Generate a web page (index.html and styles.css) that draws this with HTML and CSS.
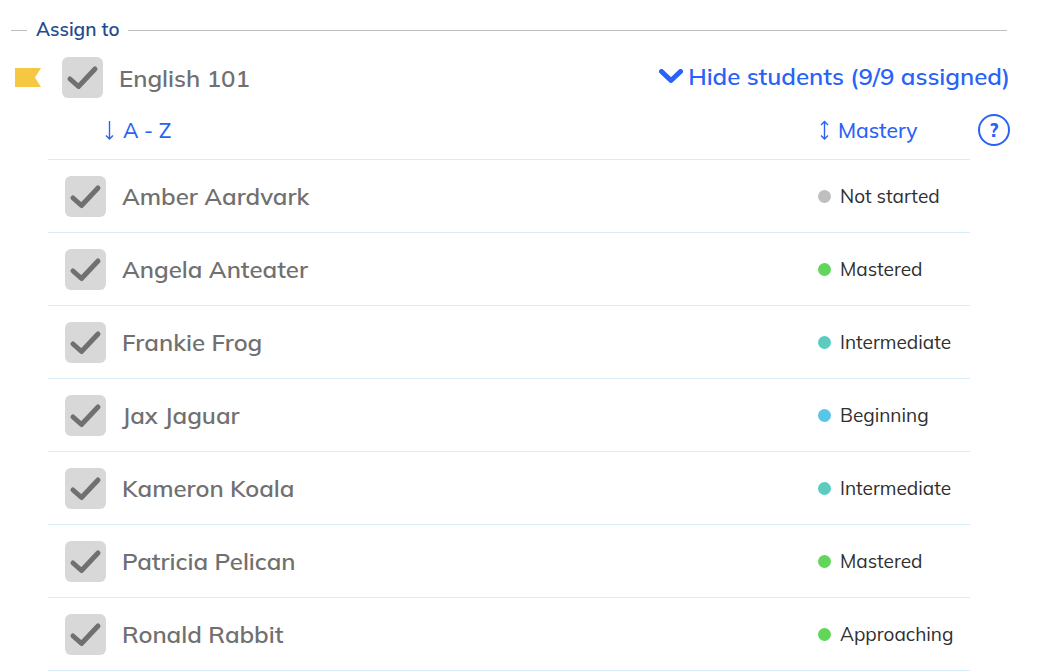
FILE: index.html
```html
<!DOCTYPE html>
<html lang="en">
<head>
<meta charset="UTF-8">
<meta name="viewport" content="width=device-width, initial-scale=1">
<title>Assign to</title>
<link rel="stylesheet" href="styles.css">
</head>
<body>
    <svg class="sprite" aria-hidden="true">
        <symbol id="check" viewBox="0 0 41 41">
            <path d="M8 22L16.500 29.500L33 12" fill="none" stroke="#707070" stroke-width="5" stroke-linecap="round" stroke-linejoin="round"/>
        </symbol>
    </svg>

    <fieldset class="assign">
        <legend>Assign to</legend>

        <div class="class-row">
            <svg class="flag" viewBox="0 0 26 19" aria-hidden="true">
                <path d="M0 0H26L20 9.500L26 19H0Z" fill="#f5c844"/>
            </svg>
            <label class="choice">
                <span class="checkbox"><input type="checkbox" checked><svg><use href="#check"/></svg></span>
                English 101
            </label>
            <button type="button" class="toggle">
                <svg class="chevron" viewBox="0 0 24 15" aria-hidden="true">
                    <path d="M2.500 2.500L12 11.500L21.500 2.500" fill="none" stroke="currentColor" stroke-width="5" stroke-linecap="round" stroke-linejoin="round"/>
                </svg>
                Hide students (9/9 assigned)
            </button>
        </div>

        <div class="sort-row">
            <button type="button" class="sort sort-name">
                <svg class="arrow" viewBox="0 0 9 20" aria-hidden="true">
                    <path d="M4.500 1V19M1 15.500L4.500 19L8 15.500" fill="none" stroke="currentColor" stroke-width="1.400"/>
                </svg>
                A - Z
            </button>
            <button type="button" class="sort sort-mastery">
                <svg class="arrow" viewBox="0 0 9 20" aria-hidden="true">
                    <path d="M4.500 1.500V19M1 5L4.500 1.500L8 5M1 15.500L4.500 19L8 15.500" fill="none" stroke="currentColor" stroke-width="1.400"/>
                </svg>
                Mastery
            </button>
            <button type="button" class="help" aria-label="Help">?</button>
        </div>

        <ul class="students">
            <li>
                <label class="choice"><span class="checkbox"><input type="checkbox" checked><svg><use href="#check"/></svg></span>Amber Aardvark</label>
                <span class="mastery"><span class="dot"></span>Not started</span>
            </li>
            <li>
                <label class="choice"><span class="checkbox"><input type="checkbox" checked><svg><use href="#check"/></svg></span>Angela Anteater</label>
                <span class="mastery"><span class="dot green"></span>Mastered</span>
            </li>
            <li>
                <label class="choice"><span class="checkbox"><input type="checkbox" checked><svg><use href="#check"/></svg></span>Frankie Frog</label>
                <span class="mastery"><span class="dot teal"></span>Intermediate</span>
            </li>
            <li>
                <label class="choice"><span class="checkbox"><input type="checkbox" checked><svg><use href="#check"/></svg></span>Jax Jaguar</label>
                <span class="mastery"><span class="dot blue"></span>Beginning</span>
            </li>
            <li>
                <label class="choice"><span class="checkbox"><input type="checkbox" checked><svg><use href="#check"/></svg></span>Kameron Koala</label>
                <span class="mastery"><span class="dot teal"></span>Intermediate</span>
            </li>
            <li>
                <label class="choice"><span class="checkbox"><input type="checkbox" checked><svg><use href="#check"/></svg></span>Patricia Pelican</label>
                <span class="mastery"><span class="dot green"></span>Mastered</span>
            </li>
            <li>
                <label class="choice"><span class="checkbox"><input type="checkbox" checked><svg><use href="#check"/></svg></span>Ronald Rabbit</label>
                <span class="mastery"><span class="dot green"></span>Approaching</span>
            </li>
        </ul>
    </fieldset>
</body>
</html>
```
FILE: styles.css
```css
* {
    margin: 0;
    padding: 0;
    box-sizing: border-box;
}

body {
    background: #fff;
    color: #2f2f2f;
    font-family: Mulish, Muli, Nunito, Lato, sans-serif;
    font-size: 19px;
    line-height: 26px;
}

button {
    border: none;
    background: none;
    color: #2962f6;
    font: inherit;
    cursor: pointer;
}

svg {
    display: block;
}

.sprite {
    width: 0;
    height: 0;
}

.assign {
    margin: 16px 33px 0 11px;
    border: 0 solid #bdbdbd;
    border-top-width: 1px;
}

legend {
    margin-left: 16px;
    padding: 0 9px 2px;
    color: #1f4b8f;
    font-weight: 600;
}

/* class header */
.class-row {
    display: flex;
    align-items: center;
    margin: 13px -3px 0 4px;
}

.flag {
    width: 26px;
    height: 19px;
    margin-right: 21px;
}

.choice {
    display: flex;
    align-items: center;
    gap: 16px;
    color: #707070;
    font-size: 24px;
    font-weight: 600;
}

.checkbox {
    display: grid;
}

.checkbox input,
.checkbox svg {
    grid-area: 1 / 1;
    width: 41px;
    height: 41px;
}

.checkbox input {
    appearance: none;
    border-radius: 6px;
    background: #d8d8d8;
}

.checkbox svg {
    pointer-events: none;
}

.checkbox input:not(:checked) + svg {
    visibility: hidden;
}

.toggle {
    display: flex;
    align-items: center;
    gap: 5px;
    margin-left: auto;
    padding-bottom: 3px;
    font-size: 24px;
    font-weight: 600;
}

.chevron {
    width: 24px;
    height: 15px;
}

/* sort controls */
.sort-row {
    display: flex;
    align-items: center;
    margin: 16px -3px 0 94px;
}

.sort {
    display: flex;
    align-items: center;
    gap: 9px;
    font-size: 21px;
    font-weight: 500;
}

.arrow {
    width: 9px;
    height: 20px;
}

.sort-mastery {
    width: 158px;
    margin-left: auto;
}

.help {
    width: 32px;
    height: 32px;
    border: 2px solid #2962f6;
    border-radius: 50%;
    font-weight: 800;
}

/* student list */
.students {
    margin: 13px 37px 0;
    border-top: 1px solid #d9edf9;
    list-style: none;
}

.students li {
    display: flex;
    align-items: center;
    justify-content: space-between;
    height: 73px;
    padding-left: 17px;
    border-bottom: 1px solid #d9edf9;
}

.mastery {
    display: flex;
    align-items: center;
    gap: 9px;
    width: 152px;
}

.dot {
    width: 13px;
    height: 13px;
    border-radius: 50%;
    background: #bfbfbf;
}

.green {
    background: #62d658;
}

.teal {
    background: #5dccc0;
}

.blue {
    background: #58c6e8;
}
```
